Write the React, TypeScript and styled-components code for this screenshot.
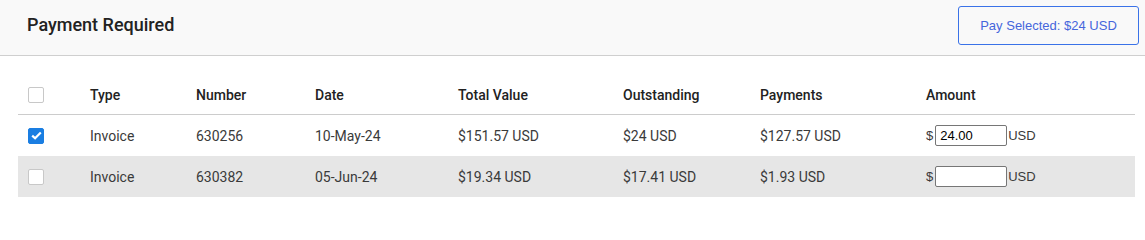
import React, { useState } from "react";
import styled, { createGlobalStyle } from "styled-components";

const GlobalStyle = createGlobalStyle`
  body {
    margin: 0;
    background: #ffffff;
    font-family: Roboto, "Liberation Sans", sans-serif;
  }
`;

const COLUMNS = "72px 106px 119px 143px 165px 137px 166px 1fr";

const Page = styled.div`
  width: 1145px;
`;

const Header = styled.header`
  height: 55px;
  display: flex;
  align-items: center;
  justify-content: space-between;
  padding: 0 6px 0 27px;
  background: #f9f9f9;
  border-bottom: 1px solid #cfcfcf;
  box-sizing: content-box;
`;

const Title = styled.h2`
  margin: 0 0 6px;
  font-size: 18px;
  font-weight: 500;
  color: #222;
`;

const PayButton = styled.button`
  width: 181px;
  height: 39px;
  margin-bottom: 4px;
  background: #f9f9f9;
  border: 1px solid #3a72e8;
  border-radius: 3px;
  color: #4566dc;
  font-family: "Liberation Sans", Arial, sans-serif;
  font-size: 13px;
  cursor: pointer;
`;

const Table = styled.div`
  margin: 20px 10px 0 18px;
`;

const Row = styled.div<{ $head?: boolean; $shaded?: boolean }>`
  display: grid;
  grid-template-columns: ${COLUMNS};
  align-items: center;
  height: ${(p) => (p.$head ? "38px" : "41px")};
  background: ${(p) => (p.$shaded ? "#e6e6e6" : "transparent")};
  border-bottom: ${(p) => (p.$head ? "1px solid #cccccc" : "none")};
  font-size: 14px;
  font-weight: ${(p) => (p.$head ? 500 : 400)};
  color: ${(p) => (p.$head ? "#222" : "#3a3a3a")};
`;

const CheckCell = styled.div`
  padding-left: 10px;
  display: flex;
  align-items: center;
`;

const Box = styled.span<{ $checked?: boolean }>`
  width: 16px;
  height: 16px;
  box-sizing: border-box;
  border-radius: 2px;
  display: inline-flex;
  align-items: center;
  justify-content: center;
  background: ${(p) => (p.$checked ? "#1a7ee2" : "#ffffff")};
  border: 1px solid ${(p) => (p.$checked ? "#1a7ee2" : "#c8c8c8")};
  cursor: pointer;
`;

const AmountCell = styled.div`
  display: flex;
  align-items: center;
  font-family: "Liberation Sans", Arial, sans-serif;
  font-size: 13px;
  color: #3a3a3a;
`;

const AmountInput = styled.input`
  width: 72px;
  height: 21px;
  box-sizing: border-box;
  margin: 0 1px 0 2px;
  padding: 0 4px;
  border: 1px solid #767676;
  border-radius: 2px;
  background: #fff;
  font-family: "Liberation Sans", Arial, sans-serif;
  font-size: 13px;
  color: #000;
`;

type Item = {
  number: string;
  date: string;
  total: string;
  outstanding: string;
  payments: string;
  amount: string;
};

const items: Item[] = [
  { number: "630256", date: "10-May-24", total: "$151.57 USD", outstanding: "$24 USD", payments: "$127.57 USD", amount: "24.00" },
  { number: "630382", date: "05-Jun-24", total: "$19.34 USD", outstanding: "$17.41 USD", payments: "$1.93 USD", amount: "" },
];

const Check: React.FC<{ checked: boolean; onClick: () => void }> = ({ checked, onClick }) => (
  <Box $checked={checked} onClick={onClick}>
    {checked && (
      <svg width="11" height="9" viewBox="0 0 11 9">
        <path d="M1.2 4.6 L4.1 7.3 L9.8 1.5" fill="none" stroke="#fff" strokeWidth="2.2" />
      </svg>
    )}
  </Box>
);

const App: React.FC = () => {
  const [selected, setSelected] = useState<boolean[]>([true, false]);
  const [amounts, setAmounts] = useState<string[]>(items.map((i) => i.amount));

  const toggle = (idx: number) => {
    setSelected(selected.map((s, i) => (i === idx ? !s : s)));
  };

  return (
    <Page>
      <GlobalStyle />
      <Header>
        <Title>Payment Required</Title>
        <PayButton>Pay Selected: $24 USD</PayButton>
      </Header>
      <Table>
        <Row $head>
          <CheckCell>
            <Check checked={false} onClick={() => {}} />
          </CheckCell>
          <div>Type</div>
          <div>Number</div>
          <div>Date</div>
          <div>Total Value</div>
          <div>Outstanding</div>
          <div>Payments</div>
          <div>Amount</div>
        </Row>
        {items.map((item, idx) => (
          <Row key={item.number} $shaded={idx % 2 === 1}>
            <CheckCell>
              <Check checked={selected[idx]} onClick={() => toggle(idx)} />
            </CheckCell>
            <div>Invoice</div>
            <div>{item.number}</div>
            <div>{item.date}</div>
            <div>{item.total}</div>
            <div>{item.outstanding}</div>
            <div>{item.payments}</div>
            <AmountCell>
              $
              <AmountInput
                value={amounts[idx]}
                onChange={(e) => setAmounts(amounts.map((a, i) => (i === idx ? e.target.value : a)))}
              />
              USD
            </AmountCell>
          </Row>
        ))}
      </Table>
    </Page>
  );
};

export default App;
